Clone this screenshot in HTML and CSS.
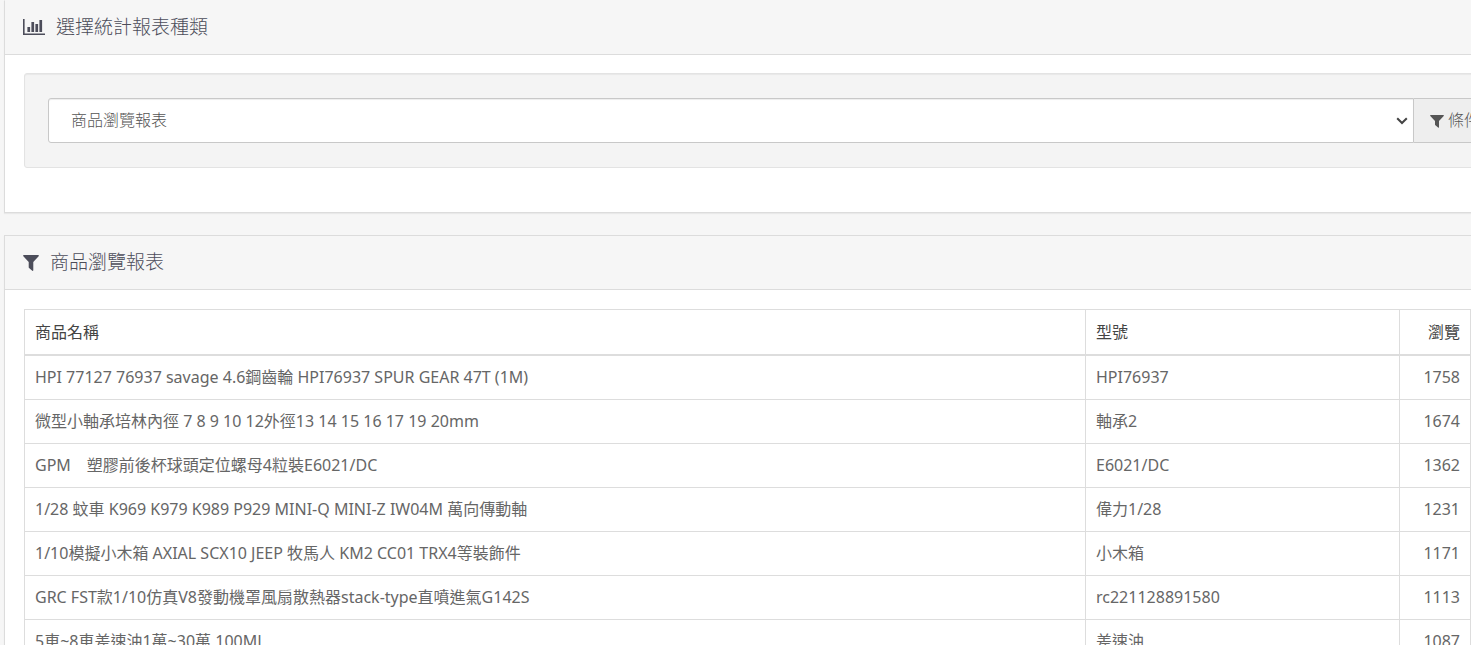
FILE: index.html
```html
<!DOCTYPE html>
<html lang="zh-Hant">
<head>
  <meta charset="utf-8">
  <title>商品瀏覽報表</title>
  <link rel="stylesheet" href="styles.css">
</head>
<body>
  <div class="container">

    <!-- Report type -->
    <div class="panel panel-first">
      <div class="panel-heading">
        <svg class="icon icon-chart" viewBox="0 0 22 18" aria-hidden="true">
          <path d="M0 0h1.6v14.400H22V16H0z"/>
          <path d="M4.400 8h2.700v5H4.400zM8.400 3h2.700v10H8.400zM12.400 5h2.700v8h-2.700zM16.400 1h2.700v12h-2.700z"/>
        </svg>
        <h3 class="panel-title">選擇統計報表種類</h3>
      </div>
      <div class="panel-body">
        <div class="well">
          <div class="input-group">
            <div class="select-wrap">
              <select class="form-control" aria-label="選擇統計報表種類">
                <option selected>商品瀏覽報表</option>
              </select>
              <svg class="select-arrow" viewBox="0 0 12 8" aria-hidden="true">
                <path d="M1.200 1.200L6 6l4.800-4.800"/>
              </svg>
            </div>
            <span class="input-group-addon">
              <svg class="icon icon-filter-small" viewBox="0 0 14 14" aria-hidden="true">
                <path d="M.7 1h12.6c.6 0 .8.6.4 1L9 7v6.200c0 .5-.5.7-.9.4L5.400 11.300c-.2-.2-.4-.4-.4-.7V7L.3 2C-.1 1.600.1 1 .7 1z"/>
              </svg>
              條件
            </span>
          </div>
        </div>
      </div>
    </div>

    <!-- Report table -->
    <div class="panel">
      <div class="panel-heading">
        <svg class="icon icon-filter" viewBox="0 0 14 14" aria-hidden="true">
          <path d="M.7 0h12.6c.6 0 .8.6.4 1L9 6.200v7.100c0 .5-.5.8-.9.5L5.300 11.400c-.2-.2-.3-.4-.3-.7V6.200L.3 1C-.1.600.1 0 .7 0z"/>
        </svg>
        <h3 class="panel-title">商品瀏覽報表</h3>
      </div>
      <div class="panel-body panel-body-table">
        <table class="table">
          <colgroup>
            <col>
            <col class="col-model">
            <col class="col-viewed">
          </colgroup>
          <thead>
            <tr>
              <th>商品名稱</th>
              <th>型號</th>
              <th class="text-right">瀏覽</th>
            </tr>
          </thead>
          <tbody>
            <tr>
              <td>HPI 77127 76937 savage 4.6鋼齒輪 HPI76937 SPUR GEAR 47T (1M)</td>
              <td>HPI76937</td>
              <td class="text-right">1758</td>
            </tr>
            <tr>
              <td>微型小軸承培林內徑 7 8 9 10 12外徑13 14 15 16 17 19 20mm</td>
              <td>軸承2</td>
              <td class="text-right">1674</td>
            </tr>
            <tr>
              <td>GPM　塑膠前後杯球頭定位螺母4粒裝E6021/DC</td>
              <td>E6021/DC</td>
              <td class="text-right">1362</td>
            </tr>
            <tr>
              <td>1/28 蚊車 K969 K979 K989 P929 MINI-Q MINI-Z IW04M 萬向傳動軸</td>
              <td>偉力1/28</td>
              <td class="text-right">1231</td>
            </tr>
            <tr>
              <td>1/10模擬小木箱 AXIAL SCX10 JEEP 牧馬人 KM2 CC01 TRX4等裝飾件</td>
              <td>小木箱</td>
              <td class="text-right">1171</td>
            </tr>
            <tr>
              <td>GRC FST款1/10仿真V8發動機罩風扇散熱器stack-type直噴進氣G142S</td>
              <td>rc221128891580</td>
              <td class="text-right">1113</td>
            </tr>
            <tr>
              <td>5車~8車差速油1萬~30萬 100ML</td>
              <td>差速油</td>
              <td class="text-right">1087</td>
            </tr>
          </tbody>
        </table>
      </div>
    </div>

  </div>
</body>
</html>
```
FILE: styles.css
```css
* {
  box-sizing: border-box;
}

body {
  margin: 0;
  overflow: hidden;
  background-color: #f6f6f6;
  color: #555;
  font-family: "Noto Sans", "Noto Sans CJK TC", sans-serif;
  font-size: 16px;
  font-weight: 300;
  line-height: 23px;
}

/* wider than the window, runs off the right side */
.container {
  margin-left: 4px;
  margin-right: -70px;
}

.panel {
  margin-bottom: 22px;
  background-color: #fff;
  border: 1px solid #dcdcdc;
  box-shadow: 0 1px 1px rgba(0, 0, 0, 0.05);
}

.panel-first {
  border-top-color: #f6f6f6;
}

.panel-heading {
  display: flex;
  align-items: center;
  padding: 15px 18px;
  background-color: #f6f6f6;
  border-bottom: 1px solid #dcdcdc;
  color: #4c4d5a;
}

.panel-title {
  margin: 0;
  font-size: 19px;
  font-weight: 300;
  line-height: 23px;
}

.panel-body {
  padding: 18px 19px;
}

.panel-body-table {
  padding: 19px 69px 19px 19px;
}

.icon {
  fill: currentColor;
  flex: none;
}

.icon-chart {
  width: 22px;
  height: 18px;
  margin-right: 11px;
}

.icon-filter {
  width: 16px;
  height: 16px;
  margin-right: 11px;
}

.icon-filter-small {
  width: 14px;
  height: 14px;
  margin-right: 4px;
}

.well {
  margin-bottom: 26px;
  padding: 24px 23px;
  background-color: #f4f4f4;
  border: 1px solid #e3e3e3;
  border-radius: 3px;
  box-shadow: inset 0 1px 1px rgba(0, 0, 0, 0.05);
}

.input-group {
  display: flex;
}

.select-wrap {
  position: relative;
  flex: 1;
}

.form-control {
  display: block;
  width: 100%;
  height: 45px;
  padding: 8px 22px;
  appearance: none;
  background-color: #fff;
  border: 1px solid #c8c8c8;
  border-radius: 3px 0 0 3px;
  box-shadow: inset 0 1px 1px rgba(0, 0, 0, 0.075);
  color: #555;
  font: inherit;
}

.select-arrow {
  position: absolute;
  top: 19px;
  right: 6px;
  width: 12px;
  height: 8px;
  fill: none;
  stroke: #444;
  stroke-width: 2;
  pointer-events: none;
}

.input-group-addon {
  display: flex;
  align-items: center;
  padding: 8px 16px;
  background-color: #eee;
  border: 1px solid #c8c8c8;
  border-left: none;
  border-radius: 0 3px 3px 0;
}

.table {
  width: 100%;
  border-collapse: collapse;
  table-layout: fixed;
}

.col-model {
  width: 314px;
}

.col-viewed {
  width: 71px;
}

.table th,
.table td {
  padding: 10px;
  border: 1px solid #ddd;
  font-weight: 400;
  text-align: left;
  white-space: nowrap;
}

.table td {
  color: #666;
}

.table thead th {
  border-bottom-width: 2px;
  color: #444;
  line-height: 24px;
}

.table .text-right {
  text-align: right;
}
```
